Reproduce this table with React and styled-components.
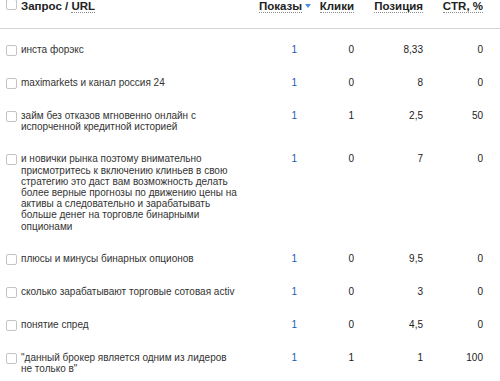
import React from "react";
import styled, { createGlobalStyle } from "styled-components";

const Global = createGlobalStyle`
  html, body { margin: 0; padding: 0; background: #fff; }
  body { font-family: "Liberation Sans", Arial, sans-serif; font-size: 10px; color: #333; overflow: hidden; }
`;

const COLS = "21px 219px 57px 57px 69px 60px 17px";

const Table = styled.div`
  width: 500px;
  height: 381px;
  overflow: hidden;
`;

const HeaderRow = styled.div`
  display: grid;
  grid-template-columns: ${COLS};
  height: 28px;
  border-bottom: 1px solid #d4d4d4;
  align-items: start;
  font-weight: bold;
  font-size: 11.5px;
  color: #222;
  line-height: 13px;
`;

const Body = styled.div`
  padding-top: 5px;
`;

const Row = styled.div`
  display: grid;
  grid-template-columns: ${COLS};
  align-items: start;
  padding: 10px 0 11px;
  line-height: 11.2px;
`;

const CheckCell = styled.div`
  display: flex;
  justify-content: flex-start;
  padding-left: 6px;
  padding-top: ${(p) => p.$top || 0}px;
  margin-top: ${(p) => p.$mt || 0}px;
`;

const Box = styled.span`
  display: block;
  width: 9px;
  height: 9px;
  border: 1px solid #c4c4c4;
  border-radius: 2px;
  background: #fff;
`;

const Query = styled.div`
  color: #333;
`;

const HeadCell = styled.div`
  text-align: ${(p) => (p.$left ? "left" : "right")};
  white-space: nowrap;
  margin-right: ${(p) => p.$mr || 0}px;
`;

const Dotted = styled.span`
  border-bottom: 1px dotted #8a8a8a;
`;

const Arrow = styled.span`
  display: inline-block;
  width: 0;
  height: 0;
  margin-left: 3px;
  vertical-align: 2px;
  border-left: 3px solid transparent;
  border-right: 3px solid transparent;
  border-top: 4px solid #4a8ee6;
`;

const Num = styled.div`
  text-align: right;
  color: ${(p) => (p.$blue ? "#1a5cb4" : "#222")};
`;

const rows = [
  ["инста форэкс", "1", "0", "8,33", "0"],
  ["maximarkets и канал россия 24", "1", "0", "8", "0"],
  ["займ без отказов мгновенно онлайн с испорченной кредитной историей", "1", "1", "2,5", "50"],
  [
    "и новички рынка поэтому внимательно присмотритесь к включению клиньев в свою стратегию это даст вам возможность делать более верные прогнозы по движению цены на активы а следовательно и зарабатывать больше денег на торговле бинарными опционами",
    "1",
    "0",
    "7",
    "0",
  ],
  ["плюсы и минусы бинарных опционов", "1", "0", "9,5", "0"],
  ["сколько зарабатывают торговые сотовая activ", "1", "0", "3", "0"],
  ["понятие спред", "1", "0", "4,5", "0"],
  ["\"данный брокер является одним из лидеров не только в\"", "1", "1", "1", "100"],
];

export default function App() {
  return (
    <Table>
      <Global />
      <HeaderRow>
        <CheckCell $mt={-1}>
          <Box />
        </CheckCell>
        <HeadCell $left>
          Запрос / <Dotted>URL</Dotted>
        </HeadCell>
        <HeadCell $mr={-14}>
          <Dotted>Показы</Dotted>
          <Arrow />
        </HeadCell>
        <HeadCell>
          <Dotted>Клики</Dotted>
        </HeadCell>
        <HeadCell>
          <Dotted>Позиция</Dotted>
        </HeadCell>
        <HeadCell>
          <Dotted>CTR, %</Dotted>
        </HeadCell>
        <div />
      </HeaderRow>
      <Body>
        {rows.map((r, i) => (
          <Row key={i}>
            <CheckCell $top={1}>
              <Box />
            </CheckCell>
            <Query>{r[0]}</Query>
            <Num $blue>{r[1]}</Num>
            <Num>{r[2]}</Num>
            <Num>{r[3]}</Num>
            <Num>{r[4]}</Num>
            <div />
          </Row>
        ))}
      </Body>
    </Table>
  );
}
